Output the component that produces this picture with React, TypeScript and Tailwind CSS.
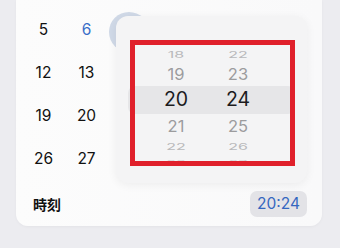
import React from "react";

const rows = [
  ["5", "6", "", "", "", "", ""],
  ["12", "13", "", "", "", "", ""],
  ["19", "20", "", "", "", "", ""],
  ["26", "27", "", "", "", "", ""],
];

type W = { h: string; m: string; cls: string; row: string; sy: number };
const wheel: W[] = [
  { h: "18", m: "22", cls: "text-[16px] text-[#b9b9bb]", row: "h-[18px]", sy: 0.6 },
  { h: "19", m: "23", cls: "text-[16.5px] text-[#9c9c9e]", row: "h-[22px]", sy: 0.92 },
  { h: "20", m: "24", cls: "text-[19.5px] text-[#1c1c1e]", row: "h-[30px]", sy: 1 },
  { h: "21", m: "25", cls: "text-[16.5px] text-[#9c9c9e]", row: "h-[22px]", sy: 0.92 },
  { h: "22", m: "26", cls: "text-[16px] text-[#b9b9bb]", row: "h-[18px]", sy: 0.6 },
  { h: "23", m: "27", cls: "text-[16px] text-[#cfcfd1]", row: "h-[16px]", sy: 0.35 },
];

export default function App() {
  return (
    <div
      className="w-[340px] h-[248px] overflow-hidden bg-[#ececf0] pl-4"
      style={{ fontFamily: "Inter, 'Noto Sans CJK JP', sans-serif" }}
    >
      <div className="relative w-[306px] rounded-b-[12px] bg-gradient-to-r from-[#fcfcfc] to-[#f9f9fa] shadow-[0_1px_3px_rgba(0,0,0,0.04)] pt-2 pb-[9px]">
        <div className="grid grid-cols-[repeat(7,43px)] pl-[6px]">
          {rows.map((r, i) =>
            r.map((d, j) => (
              <div key={`${i}-${j}`} className="relative h-[43px] flex items-center justify-center">
                {i === 0 && j === 2 && (
                  <div className="absolute left-[1px] top-[4px] w-[40px] h-[40px] rounded-full bg-[#d0d9e7]" />
                )}
                <span className={`relative text-[15.5px] ${i === 0 && j === 1 ? "text-[#3a6fc8]" : "text-[#111]"}`}>{d}</span>
              </div>
            ))
          )}
        </div>
        <div className="flex items-center justify-between pl-[17px] pr-[15px] pt-[11px]">
          <span className="text-[14px] font-bold text-[#111]">時刻</span>
          <div className="h-[26px] w-[57px] rounded-[7px] bg-[#e3e3e7] flex items-center justify-center text-[15.5px] text-[#3567c0]">
            20:24
          </div>
        </div>

        <div className="absolute left-[100px] top-[16px] w-[191px] h-[167px] rounded-[12px] bg-[#f4f4f5] shadow-[0_2px_10px_rgba(0,0,0,0.06)] overflow-hidden">
          <div className="absolute left-[12px] right-[12px] top-[70px] h-[28px] rounded-[7px] bg-[#e6e6e8]" />
          <div className="absolute left-0 top-[29px] w-full flex flex-col">
            {wheel.map((w) => (
              <div key={w.h} className={`${w.row} flex items-center`}>
                <div className="w-[60px] ml-[30px] flex justify-center">
                  <span className={`${w.cls} leading-none inline-block`} style={{ transform: `scaleY(${w.sy})` }}>
                    {w.h}
                  </span>
                </div>
                <div className="w-[60px] ml-[2px] flex justify-center">
                  <span className={`${w.cls} leading-none inline-block`} style={{ transform: `scaleY(${w.sy})` }}>
                    {w.m}
                  </span>
                </div>
              </div>
            ))}
          </div>
          <div className="absolute left-[14px] top-[24px] w-[165px] h-[126px] border-[5px] border-[#e0202b]" />
        </div>
      </div>
    </div>
  );
}
